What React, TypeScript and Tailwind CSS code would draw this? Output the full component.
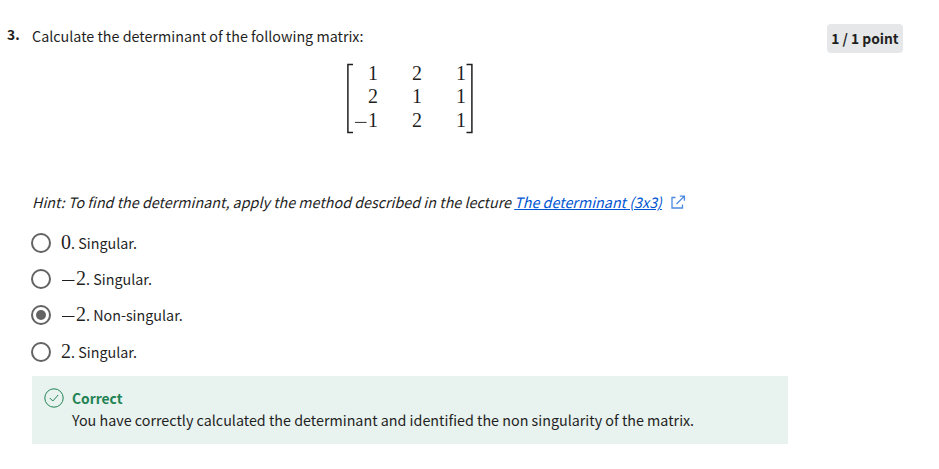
const sans = "font-['Noto_Sans_CJK_SC','Noto_Sans',sans-serif]";
const serif = "font-['Liberation_Serif',serif]";

function Radio({ checked = false }: { checked?: boolean }) {
  return (
    <span className="flex size-5 shrink-0 items-center justify-center rounded-full border-2 border-[#636363]">
      {checked && <span className="size-2.5 rounded-full bg-[#636363]" />}
    </span>
  );
}

function Minus() {
  return (
    <svg width="15" height="14" viewBox="0 0 15 14" className="inline-block align-[-1px]" fill="none" stroke="#1f1f1f">
      <path d="M1 8.5h12.5" />
    </svg>
  );
}

const options = [
  { minus: false, value: '0', label: 'Singular.', checked: false },
  { minus: true, value: '2', label: 'Singular.', checked: false },
  { minus: true, value: '2', label: 'Non-singular.', checked: true },
  { minus: false, value: '2', label: 'Singular.', checked: false },
];

const rows = [
  ['1', '2', '1'],
  ['2', '1', '1'],
  ['-1', '2', '1'],
];

export default function App() {
  return (
    <main className={`h-[469px] w-[939px] overflow-hidden bg-white text-[14.32px] text-[#1f1f1f] ${sans}`}>
      <div className="flex items-start pt-6 pl-[7px]">
        <div className="w-[25px] text-[13.8px] leading-[21px] font-bold">3.</div>
        <div className="w-[756px]">
          <p className="h-[38px] leading-[23px] whitespace-nowrap">Calculate the determinant of the following matrix:</p>
          <div className={`ml-[314px] flex h-[72px] w-[129px] ${serif} text-[20px]`}>
            <svg width="8" height="72" viewBox="0 0 8 72" fill="none" stroke="#1f1f1f" strokeWidth="1.5">
              <path d="M7 2.5H1.9V70.5H7" />
            </svg>
            <div className="grid w-[112px] grid-cols-[24px_44px_44px] grid-rows-[23px_24px_23px] text-right leading-[23px]">
              {rows.map((row, r) =>
                row.map((v, c) => (
                  <span key={`${r}-${c}`} className="flex h-[23px] items-center justify-end">
                    {v.startsWith('-') && <Minus />}
                    {v.replace('-', '')}
                  </span>
                )),
              )}
            </div>
            <svg width="8" height="72" viewBox="0 0 8 72" fill="none" stroke="#1f1f1f" strokeWidth="1.5">
              <path d="M0.5 2.5H5.9V70.5H0.5" />
            </svg>
          </div>
          <p className="mt-[56px] flex h-6 items-center leading-6 whitespace-pre italic">
            <span>Hint: To find the determinant, apply the method described in the lecture </span>
            <a className="text-[#0056d2] underline">The determinant (3x3)</a>
            <svg className="mb-px ml-[9px]" width="15" height="14" viewBox="0 0 15 14" fill="none" stroke="#4c8ae0" strokeWidth="1.3">
              <path d="M4.5 2.5H1v10.5h10.5V9.5M5.5 9 13.4 1.1M8.8 1.1h4.6v4.6" />
            </svg>
          </p>
          <div className="mt-[11px]">
            {options.map((o, i) => (
              <div key={i} className="-ml-px flex h-9 items-center whitespace-nowrap last:mt-px">
                <Radio checked={o.checked} />
                <span className="mb-px ml-2.5 leading-6">
                  <span className={`${serif} text-[20px]`}>
                    {o.minus && <Minus />}
                    {o.value}
                  </span>
                  . {o.label}
                </span>
              </div>
            ))}
          </div>
          <section className="mt-[6px] flex h-[68px] w-[756px] bg-[#e8f2ee] pt-[11px] pl-3">
            <svg className="mt-px" width="20" height="20" viewBox="0 0 20 20" fill="none" stroke="#1f8354">
              <circle cx="10" cy="10" r="9.2" />
              <path d="m5.8 10 3 3 5.4-6" />
            </svg>
            <div className="ml-2 leading-[22px] whitespace-nowrap">
              <h2 className="text-[13.8px] font-bold text-[#1f8354]">Correct</h2>
              <p>You have correctly calculated the determinant and identified the non singularity of the matrix.</p>
            </div>
          </section>
        </div>
        <div className="ml-[39px] flex h-[29px] w-[76px] items-center justify-center rounded-[4px] bg-[#e5e7e8] text-[13.8px] font-bold whitespace-nowrap">1 / 1 point</div>
      </div>
    </main>
  );
}
